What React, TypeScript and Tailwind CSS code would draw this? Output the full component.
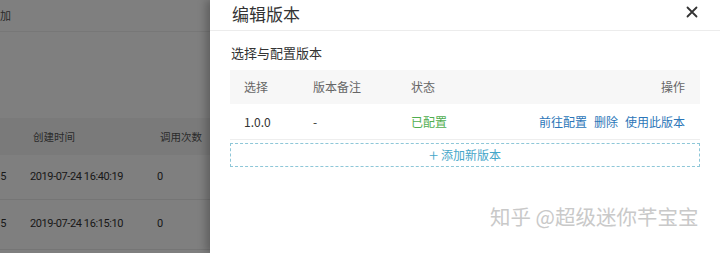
export default function App() {
  const font = { fontFamily: '"Noto Sans CJK SC", "Noto Sans", sans-serif' }

  return (
    <div className="relative w-[720px] h-[253px] overflow-hidden bg-white" style={font}>
      {/* page behind the drawer */}
      <div className="flex flex-col w-[720px] h-[253px] text-[12px] text-[#333]">
        <div className="h-[32px] border-b border-[#eee] flex items-center">
          <span className="text-[11px] text-[#555]">加</span>
        </div>
        <div className="h-[86px]" />
        <div className="h-[37px] bg-[#f5f5f5] flex items-center text-[10.5px] text-[#555]">
          <div className="w-[33px]" />
          <div className="w-[127px]">创建时间</div>
          <div>调用次数</div>
        </div>
        <div
          className="h-[45px] flex items-center border-b border-[#eaeaea] text-[11px] tracking-[-0.4px]"
          style={{ fontFamily: 'Roboto, "Noto Sans CJK SC", sans-serif' }}
        >
          <div className="w-[30px] flex justify-end pr-[24px]">5</div>
          <div className="w-[127px]">2019-07-24 16:40:19</div>
          <div>0</div>
        </div>
        <div
          className="h-[50px] flex items-center border-b border-[#eaeaea] text-[11px] tracking-[-0.4px]"
          style={{ fontFamily: 'Roboto, "Noto Sans CJK SC", sans-serif' }}
        >
          <div className="w-[30px] flex justify-end pr-[24px]">5</div>
          <div className="w-[127px]">2019-07-24 16:15:10</div>
          <div>0</div>
        </div>
      </div>

      {/* mask */}
      <div className="absolute inset-0 bg-black/50" />

      {/* drawer */}
      <div className="absolute top-0 right-0 w-[510px] h-[253px] bg-white shadow-[-4px_0_8px_rgba(0,0,0,0.25)] flex flex-col">
        <div className="h-[31px] border-b border-[#ececec] flex items-center justify-between pl-[22px] pr-[20px]">
          <span className="text-[17px] text-[#333] leading-none -mt-[4px]">编辑版本</span>
          <svg width="12" height="12" viewBox="0 0 12 12" className="-mt-[6px] mr-[2px]">
            <path d="M1.5 1.5 L10.5 10.5 M10.5 1.5 L1.5 10.5" stroke="#333" strokeWidth="1.8" strokeLinecap="round" />
          </svg>
        </div>

        <div className="px-[20px] pt-[12px]">
          <div className="text-[13px] text-[#333] leading-[20px] pl-[1px]">选择与配置版本</div>

          <div className="mt-[7px]">
            <div className="h-[34px] bg-[#f7f7f7] flex items-center px-[14px] text-[12px] text-[#666]">
              <div className="w-[69px]">选择</div>
              <div className="w-[98px]">版本备注</div>
              <div className="flex-1">状态</div>
              <div className="pr-[1px]">操作</div>
            </div>
            <div className="h-[36px] border-b border-[#eee] flex items-center px-[14px] text-[12px]">
              <div className="w-[69px] text-[#333]">1.0.0</div>
              <div className="w-[98px] text-[#333]">-</div>
              <div className="flex-1 text-[#4fae4f]">已配置</div>
              <div className="flex gap-[7px] text-[#2c76b8] pr-[1px]">
                <span>前往配置</span>
                <span>删除</span>
                <span>使用此版本</span>
              </div>
            </div>
            <div className="mt-[3px] h-[24px] border border-dashed border-[#8ec7d8] flex items-center justify-center text-[12px] text-[#45a6c9]">
              <span className="text-[17px] font-light leading-none mr-[3px] -mt-[2px]">+</span>
              <span>添加新版本</span>
            </div>
          </div>
        </div>
      </div>

      {/* watermark */}
      <div className="absolute left-[490px] top-[201px] text-[20.5px] text-[#c9c9c9] [text-shadow:0_0_1px_rgba(255,255,255,0.9)]">
        知乎 @超级迷你芊宝宝
      </div>
    </div>
  )
}
